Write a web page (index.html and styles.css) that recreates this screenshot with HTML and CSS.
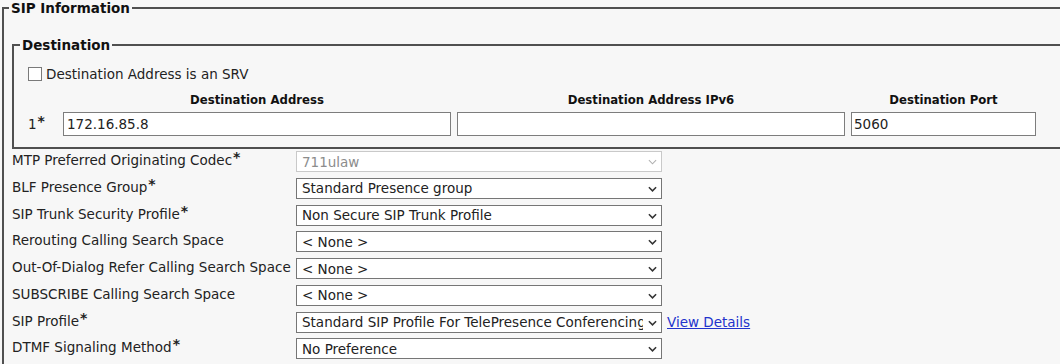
FILE: index.html
```html
<!DOCTYPE html>
<html lang="en">
<head>
    <meta charset="UTF-8">
    <title>SIP Information</title>
    <link rel="stylesheet" href="styles.css">
</head>
<body>
    <fieldset class="section">
        <legend>SIP Information</legend>

        <fieldset class="destination">
            <legend>Destination</legend>
            <label class="srv"><input type="checkbox">Destination Address is an SRV</label>
            <div class="dest-grid">
                <span></span>
                <span class="col-head">Destination Address</span>
                <span class="col-head">Destination Address IPv6</span>
                <span class="col-head">Destination Port</span>

                <span class="row-num">1<span class="req">*</span></span>
                <input type="text" class="text-field" value="172.16.85.8">
                <input type="text" class="text-field" value="">
                <input type="text" class="text-field port" value="5060">
            </div>
        </fieldset>

        <div class="settings">
            <label>MTP Preferred Originating Codec<span class="req">*</span></label>
            <div class="select-wrap disabled">
                <select disabled><option>711ulaw</option></select>
                <svg class="chevron" viewBox="0 0 10 6"><path d="M1 1 L5 5 L9 1"/></svg>
            </div>
            <span></span>

            <label>BLF Presence Group<span class="req">*</span></label>
            <div class="select-wrap">
                <select><option>Standard Presence group</option></select>
                <svg class="chevron" viewBox="0 0 10 6"><path d="M1 1 L5 5 L9 1"/></svg>
            </div>
            <span></span>

            <label>SIP Trunk Security Profile<span class="req">*</span></label>
            <div class="select-wrap">
                <select><option>Non Secure SIP Trunk Profile</option></select>
                <svg class="chevron" viewBox="0 0 10 6"><path d="M1 1 L5 5 L9 1"/></svg>
            </div>
            <span></span>

            <label>Rerouting Calling Search Space</label>
            <div class="select-wrap">
                <select><option>&lt; None &gt;</option></select>
                <svg class="chevron" viewBox="0 0 10 6"><path d="M1 1 L5 5 L9 1"/></svg>
            </div>
            <span></span>

            <label>Out-Of-Dialog Refer Calling Search Space</label>
            <div class="select-wrap">
                <select><option>&lt; None &gt;</option></select>
                <svg class="chevron" viewBox="0 0 10 6"><path d="M1 1 L5 5 L9 1"/></svg>
            </div>
            <span></span>

            <label>SUBSCRIBE Calling Search Space</label>
            <div class="select-wrap">
                <select><option>&lt; None &gt;</option></select>
                <svg class="chevron" viewBox="0 0 10 6"><path d="M1 1 L5 5 L9 1"/></svg>
            </div>
            <span></span>

            <label>SIP Profile<span class="req">*</span></label>
            <div class="select-wrap">
                <select><option>Standard SIP Profile For TelePresence Conferencing</option></select>
                <svg class="chevron" viewBox="0 0 10 6"><path d="M1 1 L5 5 L9 1"/></svg>
            </div>
            <a href="#" class="details">View Details</a>

            <label>DTMF Signaling Method<span class="req">*</span></label>
            <div class="select-wrap">
                <select><option>No Preference</option></select>
                <svg class="chevron" viewBox="0 0 10 6"><path d="M1 1 L5 5 L9 1"/></svg>
            </div>
            <span></span>
        </div>
    </fieldset>
</body>
</html>
```

FILE: styles.css
```css
body {
    margin: 0;
    background-color: #f7f7f7;
    font-family: "DejaVu Sans", Verdana, sans-serif;
    font-size: 13.5px;
    line-height: 16px;
    color: #222;
    overflow: hidden;
}

fieldset {
    margin: 0;
    border: 2px solid #505050;
    min-width: 0;
}

legend {
    font-weight: bold;
    line-height: 16px;
    padding: 0 2px;
    color: #111;
}

.section {
    margin-left: 2px;
    width: 1100px;
    padding: 21px 0 60px 8px;
}

.section > legend {
    margin-left: -3px;
}

.destination {
    padding: 13px 0 11px 14px;
}

.destination > legend {
    margin-left: -8px;
}

.srv {
    display: flex;
    align-items: center;
}

.srv input {
    appearance: none;
    width: 14px;
    height: 14px;
    margin: 0 4px 0 0;
    border: 1px solid #7a7a7a;
    background-color: #fff;
}

.dest-grid {
    display: grid;
    grid-template-columns: 29px 388px 388px 185px;
    column-gap: 6px;
    row-gap: 4px;
    margin-top: 10px;
}

.col-head {
    font-size: 11.7px;
    font-weight: bold;
    text-align: center;
    color: #111;
}

.row-num {
    align-self: center;
}

.req {
    font-size: 14px;
    font-weight: bold;
    line-height: 0;
    vertical-align: 3px;
    margin-left: 1px;
}

.text-field {
    height: 24px;
    box-sizing: border-box;
    margin: 0;
    padding: 0 3px;
    border: 1px solid #7d7d7d;
    background-color: #fff;
    font-family: inherit;
    font-size: 13.5px;
    color: #222;
}

.text-field.port {
    padding-left: 2px;
}

.settings {
    display: grid;
    grid-template-columns: 284px 366px auto;
    grid-auto-rows: 21px;
    row-gap: 5.75px;
    margin-top: 2px;
    align-items: center;
}

.settings label {
    white-space: nowrap;
    align-self: start;
    line-height: 18px;
}

.select-wrap {
    position: relative;
    height: 21px;
}

.select-wrap select {
    appearance: none;
    width: 100%;
    height: 21px;
    box-sizing: border-box;
    margin: 0;
    padding: 0 18px 0 5px;
    border: 1px solid #767676;
    border-radius: 0;
    background-color: #fff;
    font-family: inherit;
    font-size: 13.5px;
    color: #222;
}

.chevron {
    position: absolute;
    right: 5px;
    top: 8px;
    width: 9px;
    height: 6px;
    fill: none;
    stroke: #333;
    stroke-width: 1.7;
}

.select-wrap.disabled select {
    border-color: #c9c9c9;
    color: #8c8c8c;
    background-color: #fff;
    opacity: 1;
}

.select-wrap.disabled .chevron {
    stroke: #b0b0b0;
    stroke-width: 1.2;
}

.details {
    margin-left: 5px;
    color: #2233cc;
    text-decoration: underline;
}
```
